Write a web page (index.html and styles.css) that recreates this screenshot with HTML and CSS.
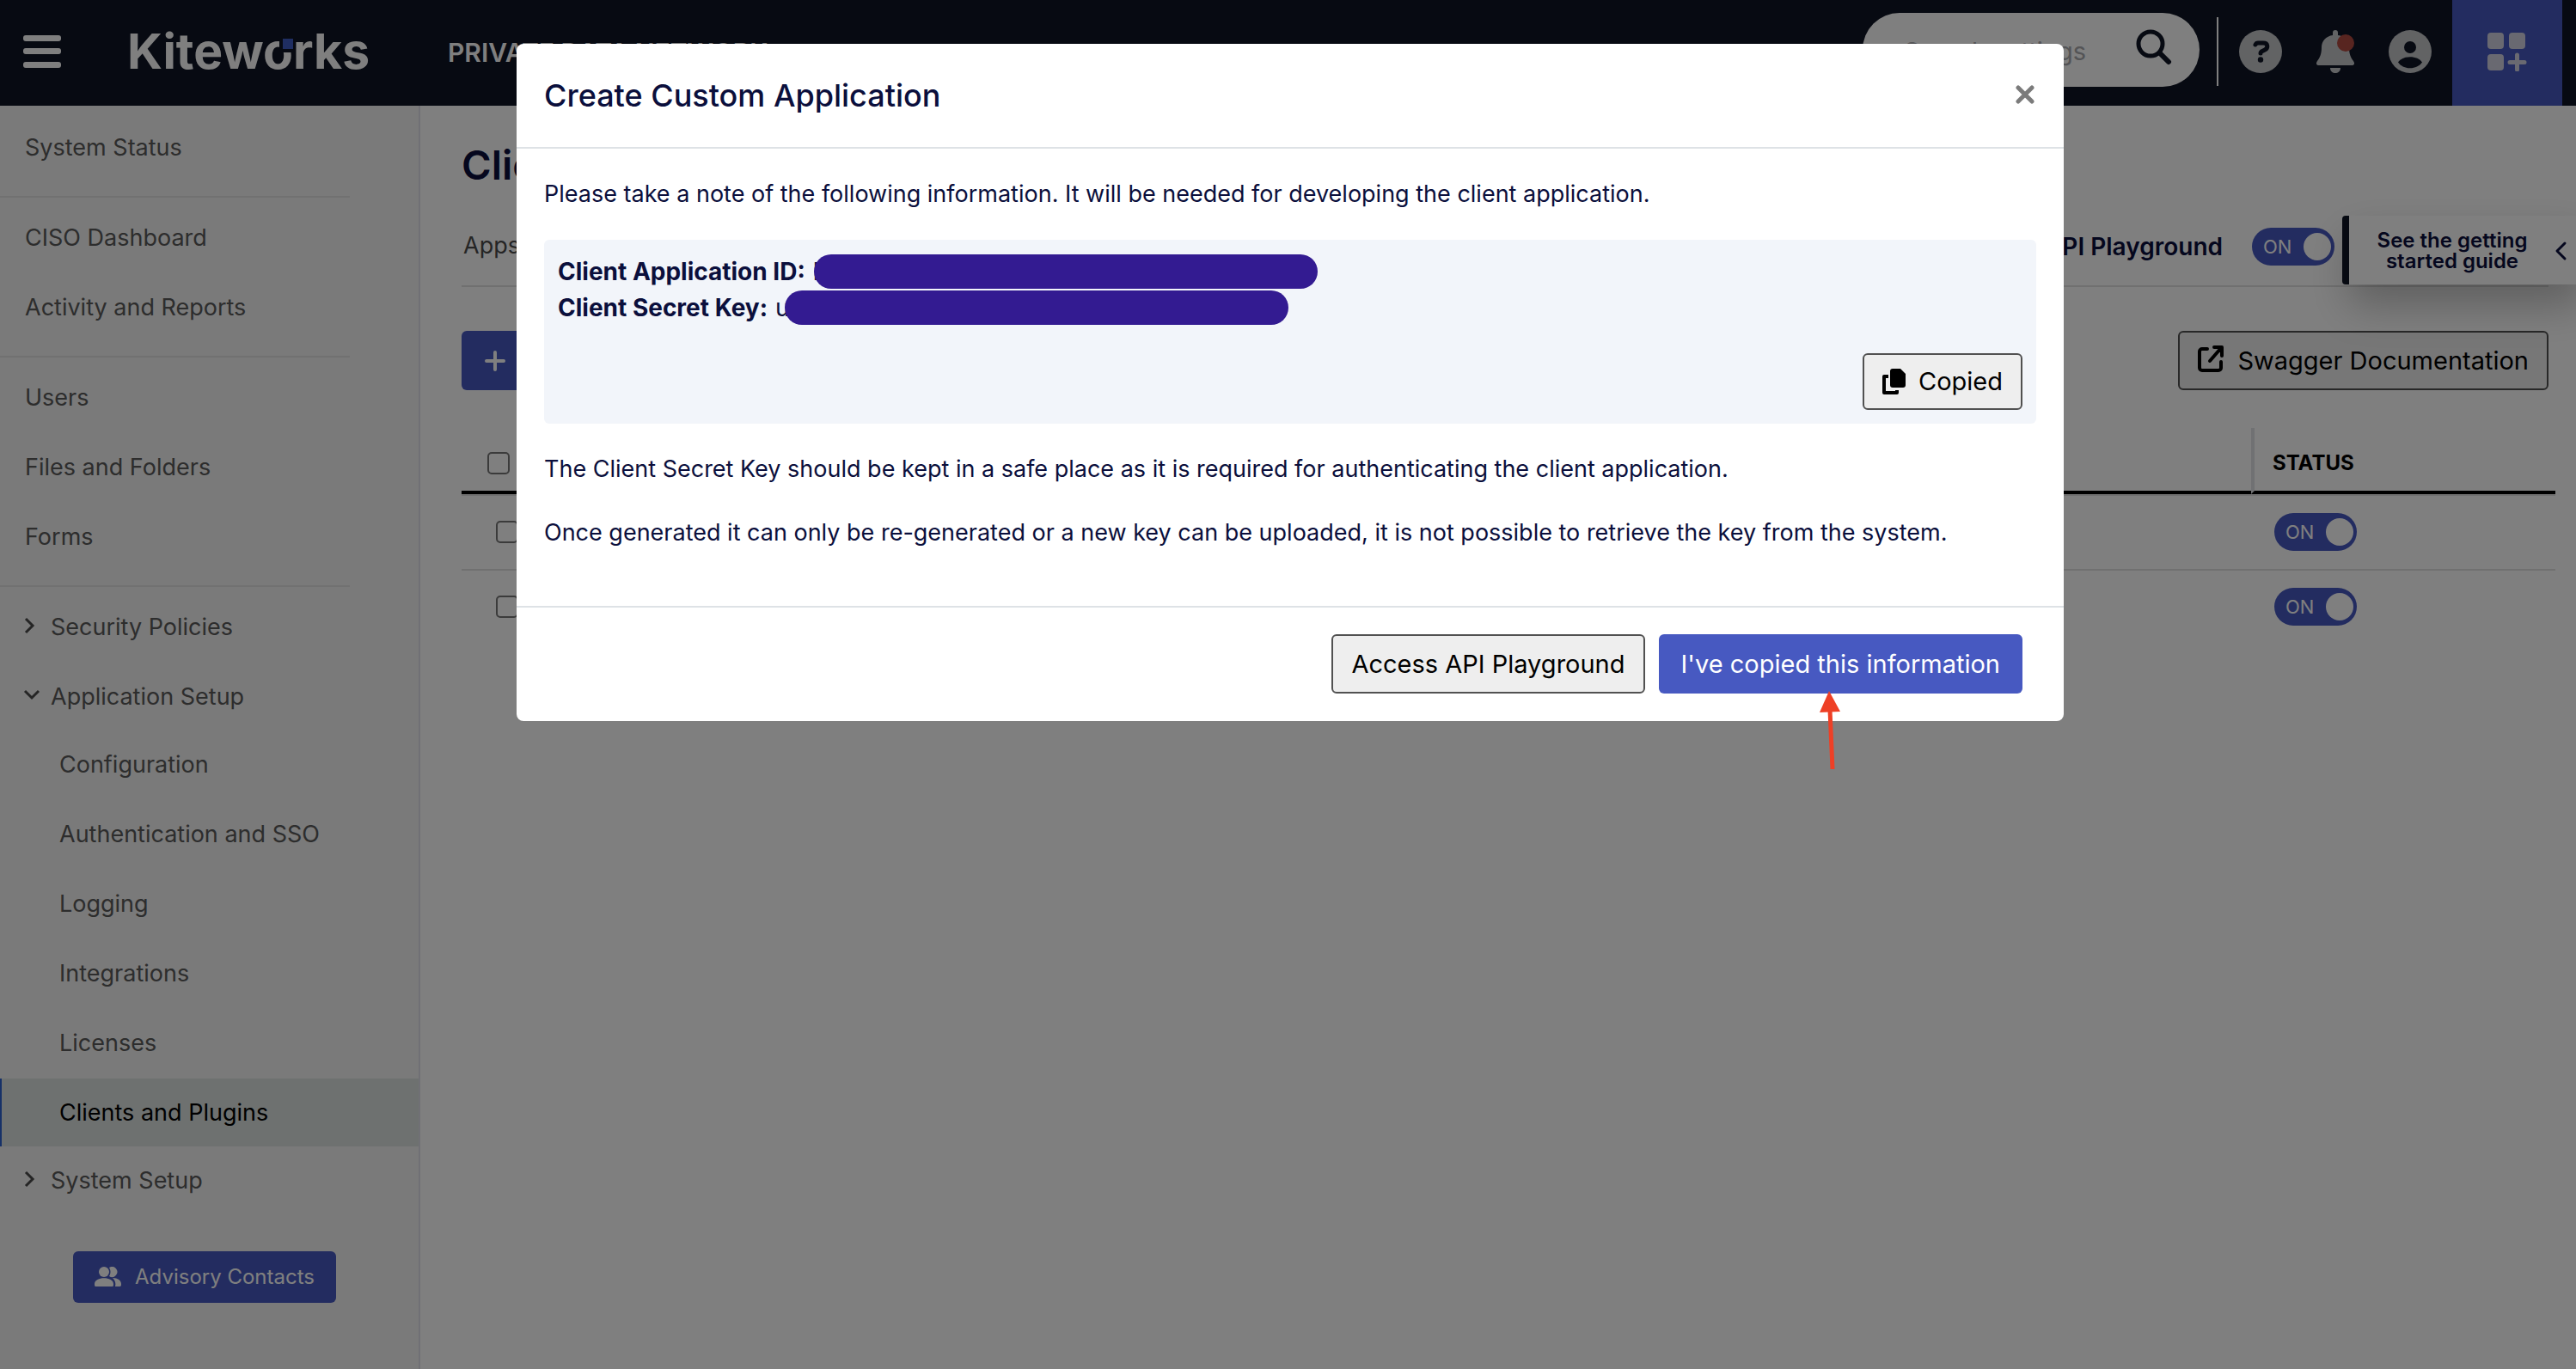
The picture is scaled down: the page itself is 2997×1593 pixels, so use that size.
FILE: index.html
```html
<!DOCTYPE html>
<html lang="en">
<head>
<meta charset="utf-8">
<title>Kiteworks - Clients and Plugins</title>
<meta name="viewport" content="width=device-width, initial-scale=1">
<link rel="stylesheet" href="styles.css">
</head>
<body>
<div class="app">
  <header class="topbar">
    <button class="icon-btn menu-btn" type="button" aria-label="Menu">
      <svg width="44" height="40" viewBox="0 0 44 40"><g fill="#fff"><rect y="1" width="44" height="7" rx="3"/><rect y="16" width="44" height="7" rx="3"/><rect y="32" width="44" height="7" rx="3"/></g></svg>
    </button>
    <a class="logo" href="#">Kitew<span class="logo-o">o</span>rks</a>
    <span class="network">PRIVATE DATA NETWORK</span>
    <form class="search" role="search">
      <input class="search-input" type="search" placeholder="Search settings" aria-label="Search settings">
      <button class="icon-btn search-btn" type="button" aria-label="Search">
        <svg width="42" height="42" viewBox="0 0 42 42" fill="none" stroke="#0e1424"><circle cx="17" cy="17" r="14" stroke-width="5"/><path d="M28 28l10 10" stroke-width="6" stroke-linecap="round"/></svg>
      </button>
    </form>
    <span class="topbar-rule"></span>
    <nav class="tools" aria-label="Tools">
      <button class="icon-btn" type="button" aria-label="Help">
        <svg width="50" height="50" viewBox="0 0 50 50"><circle cx="25" cy="25" r="25" fill="#c4c6c9"/><path d="M19 17c1-2 2-2 3-2h6c6 0 6 6 2 8l-4 2c-1 1-1 1-1 2" fill="none" stroke="#0e1424" stroke-width="5" stroke-linecap="round" stroke-linejoin="round"/><circle cx="25" cy="34.500" r="3.200" fill="#0e1424"/></svg>
      </button>
      <button class="icon-btn" type="button" aria-label="Notifications">
        <svg width="44" height="50" viewBox="0 0 44 50"><path d="M22 0c2 0 3 1 3 3v3c8 1 13 7 13 14 0 8 2 12 5 16 2 3 1 5-2 5H3c-3 0-4-2-2-5 3-4 5-8 5-16C6 13 11 7 19 6V3c0-2 1-3 3-3zM16 44h12c0 8-12 8-12 0z" fill="#c4c6c9"/><circle cx="34" cy="15" r="10" fill="#b04a40"/></svg>
      </button>
      <button class="icon-btn" type="button" aria-label="Account">
        <svg width="50" height="50" viewBox="0 0 50 50"><circle cx="25" cy="25" r="25" fill="#c4c6c9"/><circle cx="25" cy="20" r="7" fill="#0e1424"/><path d="M11 37.500c5-8.500 23-8.500 28 0-6 9-22 9-28 0z" fill="#0e1424"/></svg>
      </button>
    </nav>
    <button class="icon-btn apps-btn" type="button" aria-label="Applications">
      <svg width="46" height="46" viewBox="0 0 46 46" fill="#d2d3e2"><rect width="19" height="19" rx="4" y="1"/><rect x="25" y="1" width="19" height="19" rx="4"/><rect y="26" width="19" height="19" rx="4"/><path d="M34.500 27v17M26 35.500h17" stroke="#d2d3e2" stroke-width="5" stroke-linecap="round"/></svg>
    </button>
  </header>

  <div class="shell">
    <aside class="sidebar">
      <nav aria-label="Main">
        <ul class="nav-group">
          <li><a class="nav-link" href="#">System Status</a></li>
        </ul>
        <ul class="nav-group">
          <li><a class="nav-link" href="#">CISO Dashboard</a></li>
          <li><a class="nav-link" href="#">Activity and Reports</a></li>
        </ul>
        <ul class="nav-group">
          <li><a class="nav-link" href="#">Users</a></li>
          <li><a class="nav-link" href="#">Files and Folders</a></li>
          <li><a class="nav-link" href="#">Forms</a></li>
        </ul>
        <ul class="nav-group">
          <li><a class="nav-link" href="#"><svg class="chevron" width="20" height="20" viewBox="0 0 20 20"><path d="M1 0l8 8-8 8"/></svg>Security Policies</a></li>
          <li><a class="nav-link" href="#"><svg class="chevron" width="20" height="20" viewBox="0 0 20 20"><path d="M0 3l8 8 8-8"/></svg>Application Setup</a>
            <ul class="nav-sub">
              <li><a class="nav-link" href="#">Configuration</a></li>
              <li><a class="nav-link" href="#">Authentication and SSO</a></li>
              <li><a class="nav-link" href="#">Logging</a></li>
              <li><a class="nav-link" href="#">Integrations</a></li>
              <li><a class="nav-link" href="#">Licenses</a></li>
              <li><a class="nav-link active" href="#" aria-current="page">Clients and Plugins</a></li>
            </ul>
            <a class="nav-link" href="#"><svg class="chevron" width="20" height="20" viewBox="0 0 20 20"><path d="M1 0l8 8-8 8"/></svg>System Setup</a>
          </li>
        </ul>
      </nav>
      <button class="btn btn-primary advisory" type="button">
        <svg width="31" height="24" viewBox="0 0 31 24" fill="#fff"><circle cx="11" cy="6" r="6"/><path d="M17 1a6 6 0 1 1 0 10c2-3 2-7 0-10z"/><path d="M0 20c0-9 22-9 22 0v1c0 2-1 2-2 2H2c-1 0-2 0-2-2zM21 13c6 0 10 3 10 7 0 2 0 3-2 3h-5c1-4 0-7-3-10z"/></svg>
        Advisory Contacts
      </button>
    </aside>

    <main class="main">
      <h1 class="page-title">Clients and Plugins</h1>
      <div class="tabs">
        <a class="tab" href="#">Apps</a>
        <label class="playground">API Playground
          <span class="toggle"><input type="checkbox" role="switch" checked><span class="toggle-track">ON</span></span>
        </label>
      </div>
      <div class="toolbar">
        <button class="btn btn-primary add-btn" type="button" aria-label="Add">
          <svg width="26" height="26" viewBox="0 0 26 26" stroke="#fff" stroke-width="4" stroke-linecap="round"><path d="M13 3v20M3 13h20"/></svg>
        </button>
        <button class="btn btn-outline swagger" type="button">
          <svg width="30" height="32" viewBox="0 0 30 32" fill="none" stroke="#000" stroke-width="4" stroke-linecap="round" stroke-linejoin="round"><path d="M11 4H5a3 3 0 0 0-3 3v19a3 3 0 0 0 3 3h19a3 3 0 0 0 3-3v-7M19 2h9v10M27 3L14 18"/></svg>
          Swagger Documentation
        </button>
      </div>
      <table class="clients">
        <thead>
          <tr><th class="col-check"><input class="check" type="checkbox" aria-label="Select all"></th><th></th><th class="col-status">STATUS</th></tr>
        </thead>
        <tbody>
          <tr><td class="col-check"><input class="check" type="checkbox" aria-label="Select row 1"></td><td></td><td class="col-status"><label class="toggle"><input type="checkbox" role="switch" checked><span class="toggle-track">ON</span></label></td></tr>
          <tr><td class="col-check"><input class="check" type="checkbox" aria-label="Select row 2"></td><td></td><td class="col-status"><label class="toggle"><input type="checkbox" role="switch" checked><span class="toggle-track">ON</span></label></td></tr>
        </tbody>
      </table>
      <button class="guide" type="button">
        <span class="guide-text">See the getting started guide</span>
        <svg width="16" height="24" viewBox="0 0 16 24" fill="none" stroke="#0b0f3c" stroke-width="3" stroke-linecap="round" stroke-linejoin="round"><path d="M12 3L3 12l9 9"/></svg>
      </button>
    </main>
  </div>
</div>

<div class="backdrop">
  <section class="modal" role="dialog" aria-modal="true" aria-labelledby="modal-title">
    <header class="modal-header">
      <h2 class="modal-title" id="modal-title">Create Custom Application</h2>
      <button class="icon-btn" type="button" aria-label="Close">
        <svg width="24" height="24" viewBox="0 0 24 24" stroke="#7b7b7b" stroke-width="5" stroke-linecap="round"><path d="M3 3l16 16M19 3L3 19"/></svg>
      </button>
    </header>
    <div class="modal-body">
      <p>Please take a note of the following information. It will be needed for developing the client application.</p>
      <div class="credentials">
        <div class="credential"><strong>Client Application ID:</strong><span class="secret">l</span><span class="redaction"></span></div>
        <div class="credential"><strong>Client Secret Key:</strong><span class="secret">u</span><span class="redaction"></span></div>
        <button class="btn btn-outline copied" type="button">
          <svg width="28" height="30" viewBox="0 0 28 30"><path d="M12 0h9l6 6v13a3 3 0 0 1-3 3H12a3 3 0 0 1-3-3V3a3 3 0 0 1 3-3z"/><path d="M7 9H2v19h15v-3" fill="none" stroke="#000" stroke-width="4" stroke-linejoin="round"/></svg>
          Copied
        </button>
      </div>
      <p>The Client Secret Key should be kept in a safe place as it is required for authenticating the client application.</p>
      <p>Once generated it can only be re-generated or a new key can be uploaded, it is not possible to retrieve the key from the system.</p>
    </div>
    <footer class="modal-footer">
      <button class="btn btn-outline" type="button">Access API Playground</button>
      <div class="confirm">
        <button class="btn btn-primary" type="button">I've copied this information</button>
        <svg class="arrow" width="28" height="92" viewBox="0 0 28 92" aria-hidden="true"><path d="M14 22l3 69" stroke="#ee4026" stroke-width="5"/><path d="M13 0l13 24-24 1z" fill="#ee4026"/></svg>
      </div>
    </footer>
  </section>
</div>
</body>
</html>
```
FILE: styles.css
```css
* { box-sizing: border-box; }

body {
  margin: 0;
  font-family: Inter, "Liberation Sans", sans-serif;
  font-size: 27px;
  line-height: 42px;
  color: #0b0f3c;
  background: #fff;
}

ul { margin: 0; padding: 0; list-style: none; }
a { color: inherit; text-decoration: none; }
button, input { font: inherit; color: inherit; }
svg { display: block; flex: none; }

.icon-btn {
  display: flex;
  align-items: center;
  justify-content: center;
  flex: none;
  padding: 0;
  border: 0;
  background: none;
}

.app { display: flex; flex-direction: column; min-height: 100vh; }

/* Top bar */
.topbar {
  display: flex;
  align-items: center;
  height: 123px;
  padding: 0 16px 4px 27px;
  background: #0e1424;
  color: #fff;
}
.menu-btn { margin-right: 77px; }
.logo {
  width: 276px;
  font-size: 57px;
  font-weight: 700;
  line-height: 64px;
}
.logo-o { position: relative; }
.logo-o::after {
  content: "";
  position: absolute;
  top: 20px;
  right: 0;
  width: 12px;
  height: 12px;
  border: solid #0e1424;
  border-width: 0 0 4px 4px;
  box-sizing: content-box;
  background: #3f5cc4;
}
.network { margin-left: 97px; padding-top: 2px; font-size: 30px; font-weight: 600; }
.search {
  display: flex;
  align-items: center;
  width: 392px;
  height: 86px;
  margin: 0 20px 4px auto;
  padding: 0 32px 0 48px;
  border-radius: 43px;
  background: #fff;
}
.search-input {
  flex: 1;
  min-width: 0;
  padding: 4px 0 0;
  border: 0;
  outline: 0;
  background: none;
  font-size: 29px;
}
.search-input::placeholder { color: #a8a8ac; opacity: 1; }
.search-btn { margin-bottom: 6px; }
.topbar-rule { width: 2px; height: 80px; background: #fff; }
.tools { display: flex; gap: 40px; margin: 0 24px; }
.apps-btn {
  align-self: stretch;
  width: 128px;
  margin-bottom: -4px;
  padding-bottom: 4px;
  background: #4759c1;
}

/* Sidebar */
.shell { display: flex; flex: 1; }
.sidebar {
  width: 489px;
  flex: none;
  padding-top: 9px;
  border-right: 2px solid #e0e0ea;
  background: #f4f4f4;
  color: #5a5a5a;
}
.nav-group { display: flex; flex-direction: column; gap: 2px; }
.nav-group + .nav-group::before {
  content: "";
  width: 407px;
  height: 2px;
  margin: 17px 0 5px;
  background: #e2e2e2;
}
.nav-link {
  display: flex;
  align-items: center;
  height: 79px;
  padding-left: 29px;
}
.chevron {
  margin-right: 10px;
  overflow: visible;
  fill: none;
  stroke: #4a4a4a;
  stroke-width: 3;
}
.nav-sub { display: flex; flex-direction: column; gap: 2px; }
.nav-sub .nav-link { padding-left: 69px; }
.nav-sub .active {
  padding-left: 67px;
  border-left: 2px solid #2f62d0;
  background: #dce2e0;
  color: #000;
}

/* Buttons */
.btn {
  display: flex;
  align-items: center;
  justify-content: center;
  height: 69px;
  padding: 0 24px;
  border: 2px solid transparent;
  border-radius: 6px;
  font-size: 29px;
  white-space: nowrap;
}
.btn-primary { background: #4759c1; color: #fff; }
.btn-outline { padding: 0 21px; border-color: #515151; background: #eee; color: #000; }
.advisory {
  width: 306px;
  height: 60px;
  margin: 43px 0 0 85px;
  gap: 16px;
  font-size: 24px;
}

/* Main column */
.main {
  position: relative;
  flex: 1;
  min-width: 0;
  padding: 40px 24px 40px 48px;
}
.page-title {
  margin: 0;
  font-size: 47px;
  font-weight: 600;
  line-height: 58px;
}
.tabs {
  display: flex;
  align-items: center;
  justify-content: space-between;
  height: 95px;
  margin: 18px 8px 0 0;
  border-bottom: 2px solid #e0e0e0;
}
.tab { padding-left: 2px; color: #4a4a4a; }
.playground {
  display: flex;
  align-items: center;
  gap: 34px;
  margin-right: 249px;
  padding-top: 2px;
  font-size: 28px;
  font-weight: 600;
}
.toolbar {
  display: flex;
  justify-content: space-between;
  margin: 51px 8px 44px 0;
}
.add-btn { width: 240px; justify-content: flex-start; }
.swagger { gap: 16px; }
.swagger svg { margin-bottom: 4px; }

/* Switches and check boxes */
.toggle { display: block; position: relative; width: 96px; height: 44px; }
.toggle input {
  position: absolute;
  inset: 0;
  width: 100%;
  height: 100%;
  margin: 0;
  opacity: 0;
}
.toggle-track {
  display: flex;
  align-items: center;
  justify-content: space-between;
  height: 44px;
  padding: 0 4px 0 13px;
  border-radius: 22px;
  background: #4759c1;
  color: #fff;
  font-size: 22px;
  font-weight: 400;
}
.toggle-track::after {
  content: "";
  width: 32px;
  height: 32px;
  border-radius: 50%;
  background: #fff;
}
.check {
  display: block;
  appearance: none;
  width: 26px;
  height: 26px;
  margin: 0;
  border: 2px solid #767676;
  border-radius: 5px;
}

/* Clients table */
.clients { width: 100%; border-collapse: separate; border-spacing: 0; table-layout: fixed; }
.clients th { height: 77px; padding: 8px 0 0; border-bottom: 4px solid #000; text-align: left; }
.clients td { height: 87px; padding: 0 0 2px; border-top: 2px solid #e0e0e0; }
.clients .col-check { width: 90px; padding-left: 40px; }
.clients th.col-check { padding-left: 30px; }
.clients .col-status { width: 354px; padding-left: 27px; }
.clients th.col-status {
  padding-left: 21px;
  border-left: 4px solid #e0e2e6;
  color: #000;
  font-size: 24px;
  font-weight: 700;
}

/* Guide tab pinned to the right edge */
.guide {
  position: absolute;
  top: 128px;
  right: 0;
  display: flex;
  align-items: center;
  justify-content: space-between;
  width: 272px;
  height: 80px;
  padding: 2px 9px 0 30px;
  border: 0;
  border-left: 8px solid #0e1424;
  border-radius: 4px 0 0 4px;
  background: #fff;
  box-shadow: 8px 24px 48px rgba(0, 0, 0, .25);
  font-size: 24px;
  font-weight: 600;
  line-height: 24px;
}
.guide-text { width: 180px; }

/* Dialog */
.backdrop {
  position: fixed;
  inset: 0;
  padding: 51px 20px 0 25px;
  background: rgba(0, 0, 0, .5);
}
.modal {
  max-width: 1800px;
  margin: 0 auto;
  border-radius: 8px;
  background: #fff;
}
.modal-header {
  display: flex;
  align-items: center;
  justify-content: space-between;
  padding: 32px;
  border-bottom: 2px solid #dee2e6;
}
.modal-title { margin: 0; font-size: 36px; font-weight: 500; line-height: 56px; }
.modal-body { padding: 32px; }
.modal-body p { margin: 0 0 32px; }
.credentials {
  margin-bottom: 32px;
  padding: 16px;
  border-radius: 6px;
  background: #f2f5fa;
}
.credential { display: flex; align-items: center; font-size: 28px; }
.secret { margin-left: 9px; }
.redaction {
  width: 586px;
  height: 40px;
  margin-left: -6px;
  border-radius: 20px;
  background: #331b91;
}
.copied { height: 66px; margin: 32px 0 0 auto; gap: 14px; }
.modal-footer {
  display: flex;
  justify-content: flex-end;
  gap: 16px;
  padding: 31px 48px 32px 32px;
  border-top: 2px solid #dee2e6;
}
.confirm { position: relative; }
.arrow { position: absolute; top: 66px; left: 185px; }
```
